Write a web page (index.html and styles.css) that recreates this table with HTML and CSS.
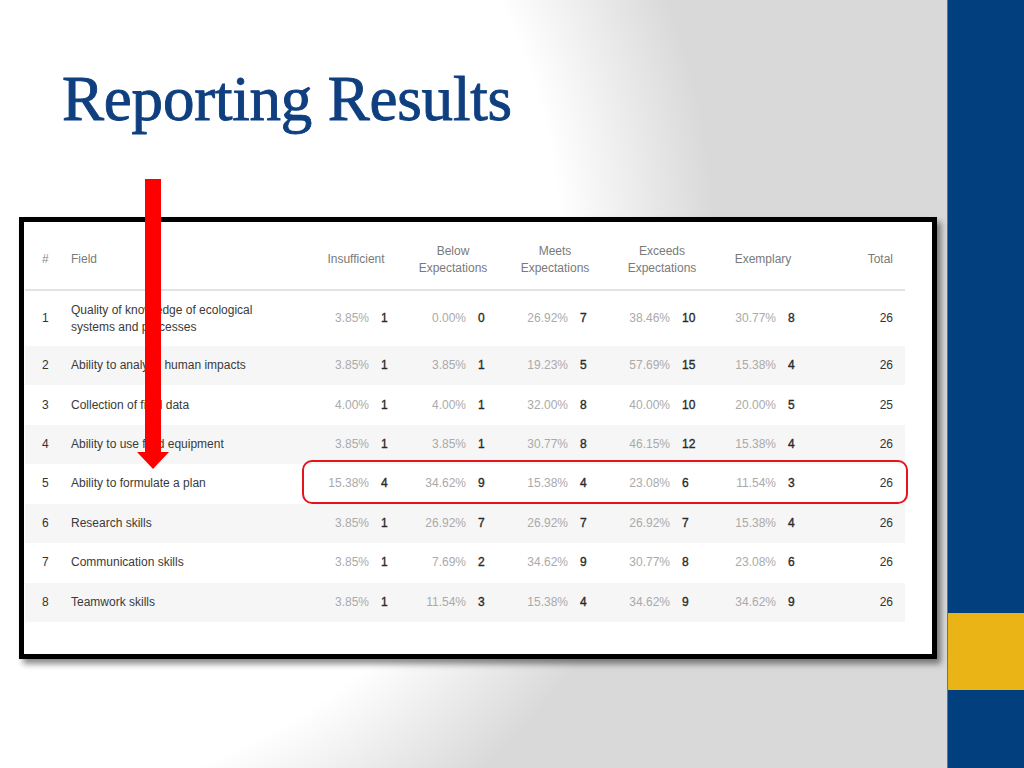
FILE: index.html
```html
<!DOCTYPE html>
<html lang="en">
<head>
<meta charset="utf-8">
<title>Reporting Results</title>
<link rel="stylesheet" href="styles.css">
</head>
<body>
<div class="slide">
  <main class="content">
    <h1 class="title">Reporting Results</h1>
    <section class="frame">
      <div class="tbl">
        <div class="row head">
          <div class="c num">#</div>
          <div class="c field">Field</div>
          <div class="c metric">Insufficient</div>
          <div class="c metric">Below<br>Expectations</div>
          <div class="c metric">Meets<br>Expectations</div>
          <div class="c metric">Exceeds<br>Expectations</div>
          <div class="c metric">Exemplary</div>
          <div class="c total">Total</div>
        </div>
        <div class="row tall">
          <div class="c num">1</div>
          <div class="c field">Quality of knowledge of ecological systems and processes</div>
          <div class="c pct">3.85%</div><div class="c cnt">1</div>
          <div class="c pct">0.00%</div><div class="c cnt">0</div>
          <div class="c pct">26.92%</div><div class="c cnt">7</div>
          <div class="c pct">38.46%</div><div class="c cnt">10</div>
          <div class="c pct">30.77%</div><div class="c cnt">8</div>
          <div class="c total">26</div>
        </div>
        <div class="row alt">
          <div class="c num">2</div>
          <div class="c field">Ability to analyze human impacts</div>
          <div class="c pct">3.85%</div><div class="c cnt">1</div>
          <div class="c pct">3.85%</div><div class="c cnt">1</div>
          <div class="c pct">19.23%</div><div class="c cnt">5</div>
          <div class="c pct">57.69%</div><div class="c cnt">15</div>
          <div class="c pct">15.38%</div><div class="c cnt">4</div>
          <div class="c total">26</div>
        </div>
        <div class="row">
          <div class="c num">3</div>
          <div class="c field">Collection of field data</div>
          <div class="c pct">4.00%</div><div class="c cnt">1</div>
          <div class="c pct">4.00%</div><div class="c cnt">1</div>
          <div class="c pct">32.00%</div><div class="c cnt">8</div>
          <div class="c pct">40.00%</div><div class="c cnt">10</div>
          <div class="c pct">20.00%</div><div class="c cnt">5</div>
          <div class="c total">25</div>
        </div>
        <div class="row alt">
          <div class="c num">4</div>
          <div class="c field">Ability to use field equipment</div>
          <div class="c pct">3.85%</div><div class="c cnt">1</div>
          <div class="c pct">3.85%</div><div class="c cnt">1</div>
          <div class="c pct">30.77%</div><div class="c cnt">8</div>
          <div class="c pct">46.15%</div><div class="c cnt">12</div>
          <div class="c pct">15.38%</div><div class="c cnt">4</div>
          <div class="c total">26</div>
        </div>
        <div class="row">
          <div class="c num">5</div>
          <div class="c field">Ability to formulate a plan</div>
          <div class="c pct">15.38%</div><div class="c cnt">4</div>
          <div class="c pct">34.62%</div><div class="c cnt">9</div>
          <div class="c pct">15.38%</div><div class="c cnt">4</div>
          <div class="c pct">23.08%</div><div class="c cnt">6</div>
          <div class="c pct">11.54%</div><div class="c cnt">3</div>
          <div class="c total">26</div>
        </div>
        <div class="row alt">
          <div class="c num">6</div>
          <div class="c field">Research skills</div>
          <div class="c pct">3.85%</div><div class="c cnt">1</div>
          <div class="c pct">26.92%</div><div class="c cnt">7</div>
          <div class="c pct">26.92%</div><div class="c cnt">7</div>
          <div class="c pct">26.92%</div><div class="c cnt">7</div>
          <div class="c pct">15.38%</div><div class="c cnt">4</div>
          <div class="c total">26</div>
        </div>
        <div class="row">
          <div class="c num">7</div>
          <div class="c field">Communication skills</div>
          <div class="c pct">3.85%</div><div class="c cnt">1</div>
          <div class="c pct">7.69%</div><div class="c cnt">2</div>
          <div class="c pct">34.62%</div><div class="c cnt">9</div>
          <div class="c pct">30.77%</div><div class="c cnt">8</div>
          <div class="c pct">23.08%</div><div class="c cnt">6</div>
          <div class="c total">26</div>
        </div>
        <div class="row alt">
          <div class="c num">8</div>
          <div class="c field">Teamwork skills</div>
          <div class="c pct">3.85%</div><div class="c cnt">1</div>
          <div class="c pct">11.54%</div><div class="c cnt">3</div>
          <div class="c pct">15.38%</div><div class="c cnt">4</div>
          <div class="c pct">34.62%</div><div class="c cnt">9</div>
          <div class="c pct">34.62%</div><div class="c cnt">9</div>
          <div class="c total">26</div>
        </div>
      </div>
    </section>
    <div class="highlight"></div>
    <svg class="arrow" width="32" height="291" viewBox="0 0 32 291" aria-hidden="true">
      <rect x="8" y="0" width="16" height="274" fill="#ff0000"/>
      <polygon points="0,273 32,273 16,290" fill="#ff0000"/>
    </svg>
  </main>
  <aside class="sidebar">
    <div class="band blue"></div>
    <div class="band gold"></div>
    <div class="band blue-end"></div>
  </aside>
</div>
</body>
</html>
```

FILE: styles.css
```css
* { box-sizing: border-box; }

html, body {
  margin: 0;
  padding: 0;
  width: 1024px;
  height: 768px;
  overflow: hidden;
}

body {
  font-family: "Liberation Sans", Arial, sans-serif;
}

.slide {
  display: flex;
  width: 1024px;
  height: 768px;
  background: radial-gradient(650px 640px at 0 250px, #ffffff 86%, #d9d9d9 110%);
}

.content {
  position: relative;
  width: 947px;
  padding-top: 68px;
}

.title {
  margin: 0 0 0 62px;
  font-family: "Liberation Serif", "Times New Roman", serif;
  font-weight: normal;
  font-size: 63px;
  line-height: 63px;
  letter-spacing: -0.2px;
  color: #0f3f7f;
  -webkit-text-stroke: 0.9px #0f3f7f;
}

.frame {
  margin: 86px 0 0 19px;
  width: 918px;
  height: 442px;
  border: 5px solid #000;
  background: #fff;
  padding: 0 28px 0 1px;
  box-shadow: 4px 5px 6px rgba(0, 0, 0, 0.45);
}

.tbl {
  width: 880px;
}

.row {
  display: grid;
  grid-template-columns: 37px 248px 63px 29px 68px 34px 68px 34px 68px 44px 62px 28px 97px;
  align-items: center;
  height: 39.43px;
  font-size: 12px;
  line-height: 17px;
}

.row.alt { background: #f6f6f6; }
.row.tall { height: 55px; }

.row.head {
  height: 69px;
  padding-top: 8px;
  border-bottom: 2px solid #e3e3e3;
  color: #7a7a7a;
}

.c { white-space: nowrap; }

.num { padding-left: 17px; color: #333; }
.head .num { color: #8a8a8a; }

.field {
  padding-left: 9px;
  padding-right: 40px;
  white-space: normal;
  color: #3a3a3a;
}
.head .field { color: #7a7a7a; }

.metric {
  grid-column: span 2;
  text-align: center;
}

.total {
  text-align: right;
  padding-right: 12px;
  color: #333;
}
.head .total { color: #7a7a7a; }

.pct {
  text-align: right;
  padding-right: 4px;
  color: #aaaaaa;
}

.cnt {
  padding-left: 8px;
  color: #2a2a2a;
  -webkit-text-stroke: 0.35px #2a2a2a;
}

.highlight {
  position: absolute;
  left: 302px;
  top: 460px;
  width: 606px;
  height: 44px;
  border: 2.5px solid #e8141c;
  border-radius: 10px;
}

.arrow {
  position: absolute;
  left: 137px;
  top: 179px;
}

.sidebar {
  width: 77px;
  display: flex;
  flex-direction: column;
  border-left: 1px solid #5577a0;
}

.band.blue { height: 613px; background: #013f7f; }
.band.gold { height: 77px; background: #ebb416; }
.band.blue-end { flex: 1; background: #013f7f; }
```
